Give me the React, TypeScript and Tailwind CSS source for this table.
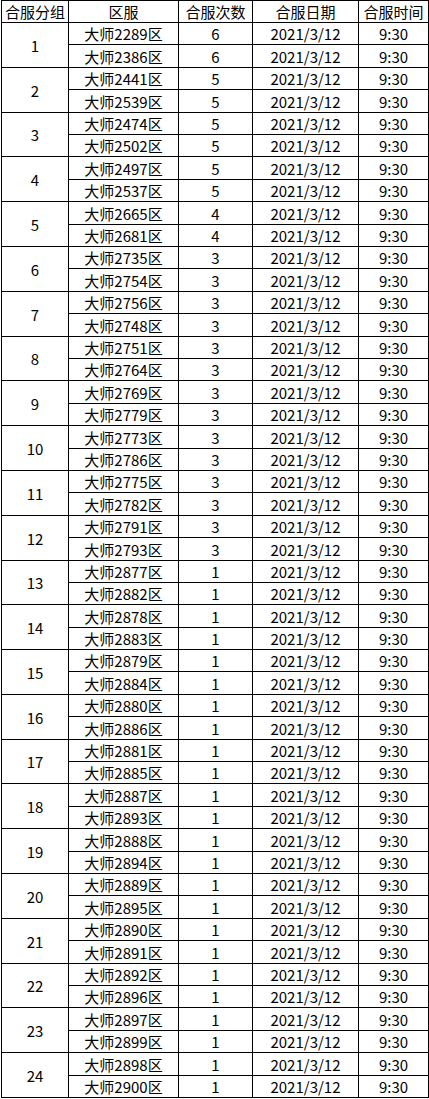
import React from "react";

type G = [number, string, string, number];

const groups: G[] = [
  [1, "2289", "2386", 6],
  [2, "2441", "2539", 5],
  [3, "2474", "2502", 5],
  [4, "2497", "2537", 5],
  [5, "2665", "2681", 4],
  [6, "2735", "2754", 3],
  [7, "2756", "2748", 3],
  [8, "2751", "2764", 3],
  [9, "2769", "2779", 3],
  [10, "2773", "2786", 3],
  [11, "2775", "2782", 3],
  [12, "2791", "2793", 3],
  [13, "2877", "2882", 1],
  [14, "2878", "2883", 1],
  [15, "2879", "2884", 1],
  [16, "2880", "2886", 1],
  [17, "2881", "2885", 1],
  [18, "2887", "2893", 1],
  [19, "2888", "2894", 1],
  [20, "2889", "2895", 1],
  [21, "2890", "2891", 1],
  [22, "2892", "2896", 1],
  [23, "2897", "2899", 1],
  [24, "2898", "2900", 1],
];

const lines: number[] = [22];
for (let k = 1; k <= 48; k++) lines.push(Math.round(22 + (k * 1075) / 48));
const heights: number[] = [22];
for (let k = 1; k <= 48; k++) heights.push(lines[k] - lines[k - 1]);

const cell =
  "border-r border-b border-black flex items-center justify-center leading-none whitespace-nowrap";

export default function App() {
  return (
    <div
      className="w-[429px] h-[1099px] bg-white text-black pl-[1px] text-[15px]"
      style={{ fontFamily: '"Noto Sans CJK SC", "Noto Sans", sans-serif' }}
    >
      <div
        className="grid grid-cols-[67px_110px_74px_106px_70px] border-l border-t border-black w-[428px]"
        style={{ gridTemplateRows: heights.map((h) => h + "px").join(" ") }}
      >
        <div className={cell}>合服分组</div>
        <div className={cell}>区服</div>
        <div className={cell}>合服次数</div>
        <div className={cell}>合服日期</div>
        <div className={cell}>合服时间</div>
        {groups.map(([n, a, b, c]) => (
          <React.Fragment key={n}>
            <div className={cell + " row-span-2"}>{n}</div>
            <div className={cell}>大师{a}区</div>
            <div className={cell}>{c}</div>
            <div className={cell}>2021/3/12</div>
            <div className={cell}>9:30</div>
            <div className={cell}>大师{b}区</div>
            <div className={cell}>{c}</div>
            <div className={cell}>2021/3/12</div>
            <div className={cell}>9:30</div>
          </React.Fragment>
        ))}
      </div>
    </div>
  );
}
